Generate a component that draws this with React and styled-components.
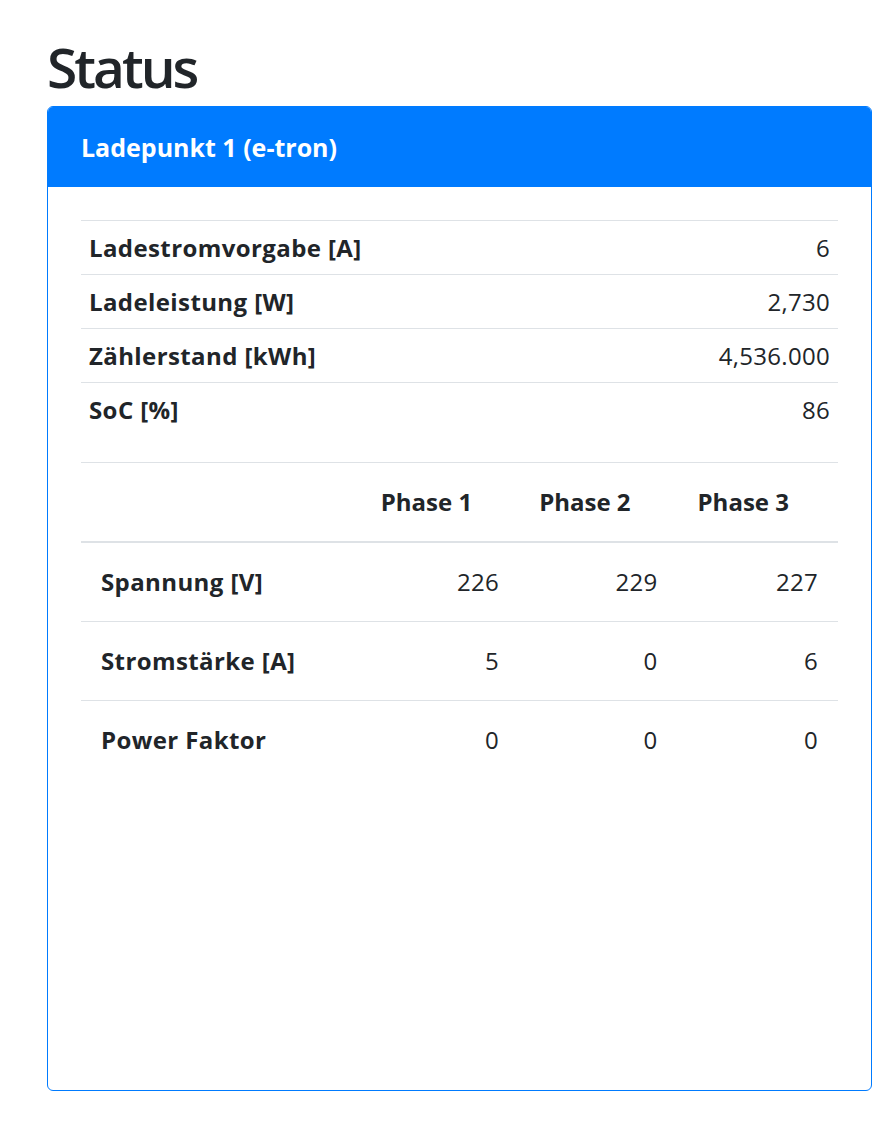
import React from 'react';
import styled, { createGlobalStyle } from 'styled-components';

const GlobalStyle = createGlobalStyle`
  body {
    margin: 0;
    background: #fff;
    color: #212529;
    font-family: 'Open Sans', 'Noto Sans', sans-serif;
  }
`;

const Page = styled.main`
  padding: 0 10px 32px 47px;
`;

const Title = styled.h1`
  margin: 0 0 6px;
  padding-top: 33px;
  font-size: 55px;
  font-weight: 600;
  line-height: 67px;
  letter-spacing: -3px;
`;

const Card = styled.section`
  display: flex;
  flex-direction: column;
  height: 985px;
  box-sizing: border-box;
  border: 1px solid #007bff;
  border-radius: 6px;
  overflow: hidden;
`;

const CardHeader = styled.header`
  display: flex;
  align-items: center;
  flex-shrink: 0;
  height: 80px;
  padding: 0 33px;
  background: #007bff;
  color: #fff;
  font-size: 25px;
  font-weight: 700;
`;

const CardBody = styled.div`
  flex: 1;
  padding: 33px;
`;

const Table = styled.table`
  width: 100%;
  border-collapse: collapse;
  font-size: 24px;
  line-height: 30px;
`;

const InfoTable = styled(Table)`
  margin-bottom: 26px;

  td {
    padding: 11.5px 8px;
    border-top: 1px solid #dee2e6;
  }
`;

const Label = styled.td`
  font-weight: 700;
  text-align: left;
  letter-spacing: 0.4px;
`;

const Value = styled.td`
  text-align: right;
  letter-spacing: 0.3px;
`;

const PhaseTable = styled(Table)`
  table-layout: fixed;

  th,
  td {
    padding: 24px 20px;
  }

  th {
    text-align: left;
    font-weight: 700;
    border-top: 1px solid #dee2e6;
    border-bottom: 2px solid #dee2e6;
  }

  tbody tr + tr td {
    border-top: 1px solid #dee2e6;
  }
`;

const Col = styled.col`
  width: ${(p) => p.$w}px;
`;

const info = [
  ['Ladestromvorgabe [A]', '6'],
  ['Ladeleistung [W]', '2,730'],
  ['Zählerstand [kWh]', '4,536.000'],
  ['SoC [%]', '86'],
];

const phases = [
  ['Spannung [V]', 226, 229, 227],
  ['Stromstärke [A]', 5, 0, 6],
  ['Power Faktor', 0, 0, 0],
];

export default function App() {
  return (
    <>
      <GlobalStyle />
      <Page>
        <Title>Status</Title>
        <Card>
          <CardHeader>Ladepunkt 1 (e-tron)</CardHeader>
          <CardBody>
            <InfoTable>
              <tbody>
                {info.map(([label, value]) => (
                  <tr key={label}>
                    <Label>{label}</Label>
                    <Value>{value}</Value>
                  </tr>
                ))}
              </tbody>
            </InfoTable>
            <PhaseTable>
              <colgroup>
                <Col $w={279} />
                <Col $w={158} />
                <Col $w={158} />
                <Col $w={160} />
              </colgroup>
              <thead>
                <tr>
                  <th />
                  <th>Phase 1</th>
                  <th>Phase 2</th>
                  <th>Phase 3</th>
                </tr>
              </thead>
              <tbody>
                {phases.map(([label, ...vals]) => (
                  <tr key={label}>
                    <Label>{label}</Label>
                    {vals.map((v, i) => (
                      <Value key={i}>{v}</Value>
                    ))}
                  </tr>
                ))}
              </tbody>
            </PhaseTable>
          </CardBody>
        </Card>
      </Page>
    </>
  );
}
